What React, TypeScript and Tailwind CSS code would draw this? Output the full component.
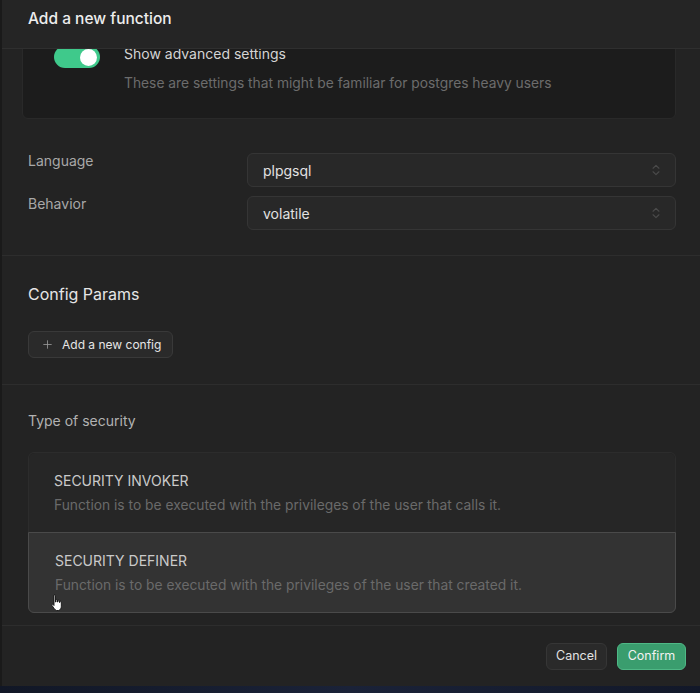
import { ChevronsUpDown, Plus } from "lucide-react";

const font = { fontFamily: "Inter, 'Noto Sans', sans-serif" };

function SelectBox({ value }: { value: string }) {
  return (
    <div className="flex h-[34px] w-[429px] items-center justify-between rounded-md border border-[#353535] bg-[#282828] pl-[15px] pr-[12px]">
      <span className="text-[14px] text-[#e2e2e2]">{value}</span>
      <ChevronsUpDown className="h-[14px] w-[14px] text-[#4a4a4a]" strokeWidth={2} />
    </div>
  );
}

function HandCursor() {
  return (
    <svg className="absolute left-[50px] top-[594px]" width="14" height="18" viewBox="0 0 14 18">
      <path
        d="M4 1.5c0-.8 1.5-.8 1.5 0V8h.5V6c0-.8 1.5-.8 1.5 0v2h.5V6.8c0-.8 1.5-.8 1.5 0V8.5h.4V7.8c0-.8 1.4-.8 1.4 0v4.5c0 2-1 3.7-2.5 4.2H6.3C5 16 3.5 13.5 2 11.5c-.6-.8.4-1.6 1.1-1L4 11.5z"
        fill="#fff"
        stroke="#111"
        strokeWidth="0.9"
      />
    </svg>
  );
}

export default function App() {
  return (
    <div className="relative h-[693px] w-[700px] overflow-hidden bg-gradient-to-r from-[#111726] via-[#1a2238] to-[#121829]" style={font}>
      <div className="flex h-[686px] flex-col border-l-2 border-[#1a1a1a] bg-[#232323]">
        {/* header */}
        <div className="flex h-[49px] shrink-0 items-center border-b border-[#2f2f2f] bg-[#252525] px-[26px] pb-[10px]">
          <h1 className="text-[15.5px] font-medium text-[#ededed]">Add a new function</h1>
        </div>

        {/* scrolled body */}
        <div className="flex-1 overflow-hidden">
          <div className="px-[20px] pr-[24px]">
            <div className="-mt-[20px] flex gap-[24px] rounded-md border border-[#292929] bg-[#1c1c1c] pl-[31px] pt-[15px] pb-[25px]">
              <div className="mt-[1px] flex h-[22px] w-[46px] items-center justify-end rounded-full bg-[#3fc98b] pr-[3px]">
                <div className="h-[17px] w-[17px] rounded-full bg-white" />
              </div>
              <div className="flex flex-col">
                <span className="mt-[1px] text-[14px] leading-[16px] text-[#d4d4d4]">Show advanced settings</span>
                <span className="mt-[11px] text-[13.8px] leading-[20px] text-[#6c6c6c]">
                  These are settings that might be familiar for postgres heavy users
                </span>
              </div>
            </div>
          </div>

          <div className="flex flex-col gap-[9px] px-[26px] pr-[24px] pt-[34px] pb-[25px]">
            <div className="flex items-start justify-between">
              <span className="text-[14px] leading-[16px] text-[#a8a8a8]">Language</span>
              <SelectBox value="plpgsql" />
            </div>
            <div className="flex items-start justify-between">
              <span className="text-[14px] leading-[16px] text-[#a8a8a8]">Behavior</span>
              <SelectBox value="volatile" />
            </div>
          </div>

          <div className="border-t border-[#2d2d2d] px-[26px] pt-[26px] pb-[26px]">
            <h2 className="text-[16px] leading-[24px] text-[#e6e6e6]">Config Params</h2>
            <button className="mt-[25px] flex h-[27px] items-center gap-[8px] rounded-md border border-[#393939] bg-[#2a2a2a] pl-[12px] pr-[11px] text-[12px] text-[#e6e6e6]">
              <Plus className="h-[13px] w-[13px] text-[#9a9a9a]" strokeWidth={1.5} />
              Add a new config
            </button>
          </div>

          <div className="border-t border-[#2d2d2d] px-[26px] pr-[24px] pt-[26px]">
            <p className="text-[14px] leading-[20px] text-[#b2b2b2]">Type of security</p>
            <div className="mt-[21px] flex flex-col rounded-md border border-[#2c2c2c]">
              <div className="h-[80px] rounded-t-md bg-[#262626] px-[25px] pt-[18px]">
                <p className="text-[14px] leading-[20px] text-[#cacaca]">SECURITY INVOKER</p>
                <p className="mt-[4px] text-[13.8px] leading-[20px] text-[#6a6a6a]">
                  Function is to be executed with the privileges of the user that calls it.
                </p>
              </div>
              <div className="-m-px h-[81px] rounded-b-md border border-[#4a4a4a] bg-[#333333] px-[26px] pt-[18px]">
                <p className="text-[14px] leading-[20px] text-[#cacaca]">SECURITY DEFINER</p>
                <p className="mt-[4px] text-[13.8px] leading-[20px] text-[#6a6a6a]">
                  Function is to be executed with the privileges of the user that created it.
                </p>
              </div>
            </div>
          </div>
        </div>

        {/* footer */}
        <div className="flex h-[61px] shrink-0 items-center justify-end gap-[10px] border-t border-[#2d2d2d] pr-[14px] pt-[1px]">
          <button className="h-[27px] w-[61px] rounded-md border border-[#363636] bg-[#2a2a2a] text-[12.5px] text-[#e2e2e2]">
            Cancel
          </button>
          <button className="h-[27px] w-[69px] rounded-md border border-[#4fb886] bg-[#3a9d6e] text-[12.5px] text-[#f2f2f2]">
            Confirm
          </button>
        </div>
      </div>
      <HandCursor />
    </div>
  );
}
